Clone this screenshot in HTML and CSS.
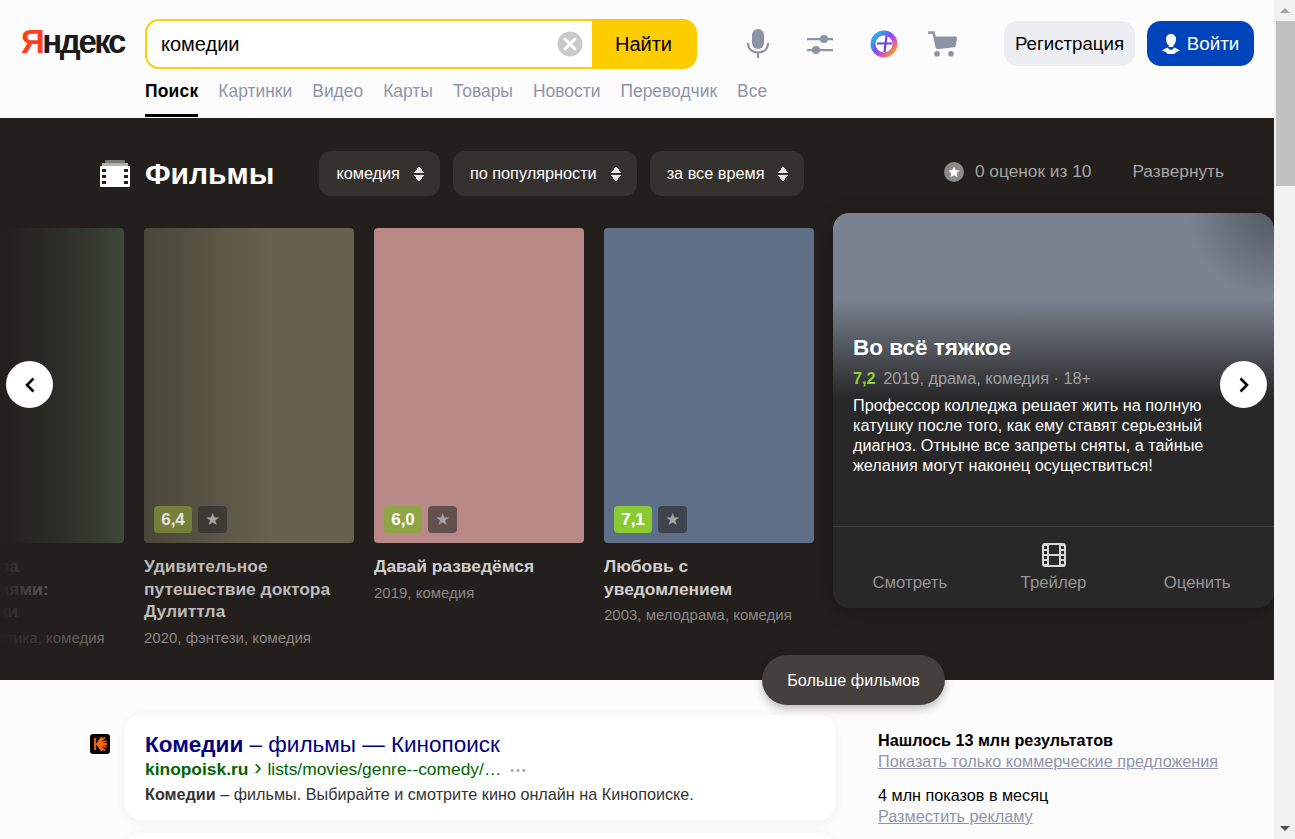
FILE: index.html
```html
<!DOCTYPE html>
<html lang="ru">
<head>
    <meta charset="UTF-8">
    <meta name="viewport" content="width=device-width, initial-scale=1.0">
    <title>комедии — Яндекс</title>
    <link rel="stylesheet" href="styles.css">
</head>
<body>
<div class="window">
<div class="page">

    <header class="header">
        <div class="header-top">
            <div class="logo"><span class="logo-red">Я</span>ндекс</div>
            <form class="search">
                <div class="search-field">
                    <span class="search-text">комедии</span>
                    <svg class="search-clear" width="26" height="26" viewBox="0 0 26 26"><circle cx="13" cy="13" r="12.5" fill="#c9c9c9"/><path d="M8 8l10 10M18 8L8 18" stroke="#fff" stroke-width="3" stroke-linecap="round"/></svg>
                </div>
                <div class="search-btn">Найти</div>
            </form>
            <div class="tools">
                <svg width="24" height="32" viewBox="0 0 24 32"><rect x="6" y="1" width="12" height="20" rx="6" fill="#8d93a5"/><path d="M2 15c0 6 4 9.500 10 9.500s10-3.500 10-9.500" fill="none" stroke="#8d93a5" stroke-width="2.200"/><rect x="11" y="24" width="2" height="6" fill="#8d93a5"/></svg>
                <svg width="26" height="24" viewBox="0 0 26 24"><rect x="0" y="6" width="26" height="2.200" fill="#8d93a5"/><circle cx="17" cy="7" r="4" fill="#8d93a5"/><rect x="0" y="17" width="26" height="2.200" fill="#8d93a5"/><circle cx="9" cy="18" r="4" fill="#8d93a5"/></svg>
                <svg width="28" height="28" viewBox="0 0 28 28">
                    <defs><linearGradient id="plus-ring" x1="0" y1=".3" x2=".8" y2="1"><stop offset="0" stop-color="#2fa8f0"/><stop offset=".4" stop-color="#7a4df0"/><stop offset=".7" stop-color="#d84fc0"/><stop offset="1" stop-color="#f5903a"/></linearGradient></defs>
                    <circle cx="14" cy="14" r="11" fill="#fff" stroke="url(#plus-ring)" stroke-width="5"/>
                    <path d="M7 13.500h15M16.500 6l-2 16" stroke="#6a45e0" stroke-width="2.200" fill="none"/>
                </svg>
                <svg class="tool-cart" width="30" height="26" viewBox="0 0 30 26"><path d="M1 1.500h4.500l3.500 15" fill="none" stroke="#8d93a5" stroke-width="2.600" stroke-linecap="round"/><path d="M7 5.500h20a2 2 0 0 1 2 2.300l-1.300 7a2 2 0 0 1-1.700 1.500l-16.500 2z" fill="#8d93a5"/><circle cx="9" cy="22.800" r="2.800" fill="#8d93a5"/><circle cx="23" cy="22.800" r="2.800" fill="#8d93a5"/></svg>
            </div>
            <a class="btn-register">Регистрация</a>
            <a class="btn-login">
                <svg width="18" height="22" viewBox="0 0 18 22"><path d="M9 1c3 0 5 2.200 5 5.200 0 2.600-1.400 5-2.800 6.300v1.500H6.800v-1.500C5.400 11.200 4 8.800 4 6.200 4 3.200 6 1 9 1z" fill="#fff"/><path d="M0 17.500c2-1.500 4-2.500 6-3 .5 1.500 1.500 2.300 3 2.300s2.500-.8 3-2.300c2 .5 4 1.500 6 3-2.500 1-4.500 1.800-6 3.500H6c-1.500-1.700-3.500-2.500-6-3.500z" fill="#fff"/></svg>
                Войти
            </a>
        </div>
        <nav class="tabs">
            <a class="tab tab-active">Поиск</a>
            <a class="tab">Картинки</a>
            <a class="tab">Видео</a>
            <a class="tab">Карты</a>
            <a class="tab">Товары</a>
            <a class="tab">Новости</a>
            <a class="tab">Переводчик</a>
            <a class="tab">Все</a>
        </nav>
    </header>

    <section class="films">
        <div class="films-head">
            <svg class="films-icon" width="30" height="27" viewBox="0 0 30 27"><rect x="5" y="0" width="20" height="3" rx="1" fill="#7b7876"/><rect x="2" y="3" width="26" height="3" fill="#b5b3b1"/><rect x="0" y="6" width="30" height="21" rx="1" fill="#fff"/><g fill="#231f1c"><rect x="2" y="9" width="4" height="3"/><rect x="2" y="15" width="4" height="3"/><rect x="2" y="21" width="4" height="3"/><rect x="24" y="9" width="4" height="3"/><rect x="24" y="15" width="4" height="3"/><rect x="24" y="21" width="4" height="3"/></g></svg>
            <h2 class="films-title">Фильмы</h2>
            <div class="chip">комедия <span class="chip-arrows"></span></div>
            <div class="chip">по популярности <span class="chip-arrows"></span></div>
            <div class="chip">за все время <span class="chip-arrows"></span></div>
            <div class="films-right">
                <svg width="20" height="20" viewBox="0 0 20 20"><circle cx="10" cy="10" r="10" fill="#8a8a8a"/><path d="M10 4.500l1.700 3.600 3.900.5-2.900 2.700.8 3.900-3.500-2-3.500 2 .8-3.900-2.900-2.700 3.900-.5z" fill="#fff"/></svg>
                <span class="rates">0 оценок из 10</span>
                <span class="expand">Развернуть</span>
            </div>
        </div>

        <div class="carousel">
            <article class="film">
                <div class="poster poster-green"></div>
                <h3 class="film-name">Охотники за привидениями: Наследники</h3>
                <p class="film-meta">2020, фантастика, комедия</p>
            </article>
            <article class="film">
                <div class="poster poster-olive">
                    <span class="score score-dim">6,4</span><span class="star-box">★</span>
                </div>
                <h3 class="film-name">Удивительное путешествие доктора Дулиттла</h3>
                <p class="film-meta">2020, фэнтези, комедия</p>
            </article>
            <article class="film">
                <div class="poster poster-pink">
                    <span class="score score-mid">6,0</span><span class="star-box">★</span>
                </div>
                <h3 class="film-name">Давай разведёмся</h3>
                <p class="film-meta">2019, комедия</p>
            </article>
            <article class="film">
                <div class="poster poster-blue">
                    <span class="score score-green">7,1</span><span class="star-box">★</span>
                </div>
                <h3 class="film-name">Любовь с уведомлением</h3>
                <p class="film-meta">2003, мелодрама, комедия</p>
            </article>
            <div class="fade-left"></div>
        </div>

        <article class="film-open">
            <div class="open-body">
                <h3 class="open-title">Во всё тяжкое</h3>
                <p class="open-meta"><b class="open-score">7,2</b> 2019, драма, комедия · 18+</p>
                <p class="open-desc">Профессор колледжа решает жить на полную катушку после того, как ему ставят серьезный диагноз. Отныне все запреты сняты, а тайные желания могут наконец осуществиться!</p>
            </div>
            <div class="open-actions">
                <span class="open-action">Смотреть</span>
                <span class="open-action">
                    <svg width="24" height="24" viewBox="0 0 24 24"><rect width="24" height="24" rx="3" fill="#d8d8d8"/><g fill="#282828"><rect x="7" y="2" width="10" height="9"/><rect x="7" y="13" width="10" height="9"/><rect x="2" y="3" width="3" height="3"/><rect x="2" y="8" width="3" height="3"/><rect x="2" y="13" width="3" height="3"/><rect x="2" y="18" width="3" height="3"/><rect x="19" y="3" width="3" height="3"/><rect x="19" y="8" width="3" height="3"/><rect x="19" y="13" width="3" height="3"/><rect x="19" y="18" width="3" height="3"/></g></svg>
                    Трейлер
                </span>
                <span class="open-action">Оценить</span>
            </div>
        </article>

        <a class="round-btn round-prev"><svg width="12" height="16" viewBox="0 0 12 16"><path d="M9.500 1.500L3 8l6.500 6.500" fill="none" stroke="#000" stroke-width="2.600"/></svg></a>
        <a class="round-btn round-next"><svg width="12" height="16" viewBox="0 0 12 16"><path d="M2.500 1.500L9 8l-6.500 6.500" fill="none" stroke="#000" stroke-width="2.600"/></svg></a>
        <a class="more-btn">Больше фильмов</a>
    </section>

    <div class="results">
        <div class="results-main">
            <svg class="favicon" width="20" height="20" viewBox="0 0 20 20"><rect width="20" height="20" rx="3" fill="#000"/><g stroke="#f60" stroke-width="1.800" fill="none"><path d="M5 4v12M15 3.500L7 10l8 6.500M16.500 7L7 10l9.500 3M17 10H7M12 3L7 10l5 7"/></g></svg>
            <div class="result-col">
                <div class="result">
                    <a class="result-title"><b>Комедии</b> – фильмы — Кинопоиск</a>
                    <div class="result-url"><b>kinopoisk.ru</b> <span class="crumb">›</span> lists/movies/genre--comedy/… <span class="dots">•••</span></div>
                    <p class="result-text"><b>Комедии</b> – фильмы. Выбирайте и смотрите кино онлайн на Кинопоиске.</p>
                </div>
                <div class="result"></div>
            </div>
        </div>
        <aside class="side">
            <div class="side-bold">Нашлось 13 млн результатов</div>
            <a class="side-link">Показать только коммерческие предложения</a>
            <div class="side-plain">4 млн показов в месяц</div>
            <a class="side-link">Разместить рекламу</a>
        </aside>
    </div>
</div>

<div class="scrollbar">
    <span class="scroll-up"></span>
    <span class="scroll-thumb"></span>
    <span class="scroll-down"></span>
</div>
</div>
</body>
</html>
```

FILE: styles.css
```css
* {
    box-sizing: border-box;
}

html, body {
    margin: 0;
    height: 100%;
    overflow: hidden;
}

body {
    font-family: "Liberation Sans", Arial, sans-serif;
    background-color: #fcfcfc;
    color: #000;
}

h2, h3, p {
    margin: 0;
}

.window {
    display: flex;
    height: 839px;
}

.page {
    position: relative;
    width: 1274px;
    flex: none;
    height: 839px;
    overflow: hidden;
}

/* шапка */
.header {
    height: 118px;
    padding-top: 19px;
}

.header-top {
    display: flex;
    align-items: flex-start;
    height: 50px;
}

.logo {
    width: 124px;
    padding: 3px 0 0 21px;
    font-size: 33px;
    line-height: 40px;
    font-weight: bold;
    letter-spacing: -2.400px;
    color: #1a1a1a;
    flex: none;
}

.logo-red {
    color: #fc3f1d;
}

.search {
    display: flex;
    width: 552px;
    height: 50px;
    margin-left: 21px;
    background-color: #fc0;
    border-radius: 14px;
    padding: 2px;
    flex: none;
}

.search-field {
    display: flex;
    align-items: center;
    justify-content: space-between;
    width: 445px;
    background-color: #fff;
    border-radius: 12px 0 0 12px;
    padding: 0 9px 0 14px;
}

.search-text {
    font-size: 20px;
}

.search-btn {
    flex: 1;
    text-align: center;
    font-size: 20px;
    line-height: 46px;
}

.tools {
    display: flex;
    align-items: center;
    width: 307px;
    height: 50px;
    padding-left: 49px;
    gap: 37px;
    flex: none;
}

.tools svg {
    flex: none;
}

.tools .tool-cart {
    margin-left: -7px;
}

.btn-register, .btn-login {
    display: flex;
    align-items: center;
    justify-content: center;
    height: 45px;
    margin-top: 2px;
    border-radius: 14px;
    font-size: 18.700px;
    flex: none;
}

.btn-register {
    width: 131px;
    background-color: #eceef2;
}

.btn-login {
    width: 107px;
    margin-left: 12px;
    gap: 7px;
    background-color: #0044bb;
    color: #fff;
}

.tabs {
    display: flex;
    gap: 20px;
    margin: 11px 0 0 145px;
}

.tab {
    height: 37px;
    font-size: 17.450px;
    line-height: 22px;
    color: #8f95a8;
}

.tab-active {
    font-weight: bold;
    letter-spacing: .2px;
    color: #000;
    border-bottom: 3px solid #000;
}

/* блок с фильмами */
.films {
    position: relative;
    height: 562px;
    background-color: #231f1c;
}

.films-head {
    display: flex;
    align-items: center;
    height: 45px;
    padding: 0 50px 0 100px;
    position: relative;
    top: 33px;
}

.films-icon {
    flex: none;
}

.films-title {
    margin: 0 45px 0 15px;
    font-size: 30px;
    color: #fff;
}

.chip {
    display: flex;
    align-items: center;
    gap: 14px;
    height: 45px;
    margin-right: 13px;
    padding: 0 16px 0 17px;
    background-color: #35312e;
    border-radius: 12px;
    font-size: 16.250px;
    color: #fff;
    white-space: nowrap;
}

.chip-arrows {
    display: inline-block;
    width: 10px;
    height: 16px;
    background:
        linear-gradient(to top left, #e6e6e6 50%, transparent 50%) left top / 5px 7px no-repeat,
        linear-gradient(to top right, #e6e6e6 50%, transparent 50%) right top / 5px 7px no-repeat,
        linear-gradient(to bottom left, #e6e6e6 50%, transparent 50%) left bottom / 5px 7px no-repeat,
        linear-gradient(to bottom right, #e6e6e6 50%, transparent 50%) right bottom / 5px 7px no-repeat;
}

.films-right {
    display: flex;
    align-items: center;
    margin: -4px 0 0 auto;
    color: #a5a5a5;
    font-size: 17.300px;
}

.rates {
    margin-left: 11px;
}

.expand {
    margin-left: 41px;
}

.carousel {
    position: relative;
    display: flex;
    gap: 20px;
    margin: 65px 0 0 -86px;
}

.film {
    width: 210px;
    flex: none;
}

.poster {
    display: flex;
    align-items: flex-end;
    gap: 6px;
    height: 315px;
    padding: 0 0 10px 10px;
    border-radius: 4px;
    margin-bottom: 12px;
}

.poster-green {
    background: linear-gradient(to right, #232a22, #3f4a3c);
}

.poster-olive {
    background: linear-gradient(to right, #4a4639, #67624f 60%);
}

.poster-pink {
    background-color: #b98988;
}

.poster-blue {
    background-color: #5f6f87;
}

.score {
    width: 38px;
    height: 27px;
    border-radius: 4px;
    font-size: 17px;
    font-weight: bold;
    line-height: 27px;
    text-align: center;
    color: #fff;
}

.score-dim {
    background-color: #748039;
    color: #e2e2e2;
}

.score-mid {
    background-color: #8fa442;
}

.score-green {
    background-color: #8acb35;
}

.star-box {
    width: 29px;
    height: 27px;
    border-radius: 4px;
    background-color: rgba(40, 40, 40, .6);
    color: #a5a5a5;
    font-size: 17px;
    line-height: 27px;
    text-align: center;
}

.film-name {
    font-size: 17.400px;
    line-height: 22.500px;
    color: #cfcfcf;
}

.film-meta {
    margin-top: 6px;
    font-size: 15px;
    line-height: 18px;
    color: #8a8784;
}

.film:nth-child(1) .film-name,
.film:nth-child(2) .film-name {
    color: #bdbbb9;
}

.fade-left {
    position: absolute;
    left: 86px;
    top: 0;
    bottom: 0;
    width: 130px;
    background: linear-gradient(to right, #231f1c, rgba(35, 31, 28, 0));
}

.film-open {
    position: absolute;
    left: 833px;
    top: 95px;
    width: 441px;
    height: 395px;
    display: flex;
    flex-direction: column;
    border-radius: 16px;
    overflow: hidden;
    background:
        radial-gradient(circle at 100% 0, rgba(70, 74, 84, .75), rgba(70, 74, 84, 0) 85px),
        linear-gradient(to bottom, #7b8290 0, #7b8290 85px, #282828 185px);
    box-shadow: 0 4px 20px rgba(0, 0, 0, .3);
}

.open-body {
    flex: 1;
    padding: 121px 20px 0;
}

.open-title {
    font-size: 22.500px;
    line-height: 28px;
    color: #fff;
}

.open-meta {
    margin-top: 6px;
    font-size: 16.300px;
    line-height: 20px;
    color: #a0a0a0;
}

.open-score {
    color: #8fd030;
    margin-right: 3px;
}

.open-desc {
    margin-top: 7px;
    width: 365px;
    font-size: 16.250px;
    line-height: 20px;
    color: #fff;
}

.open-actions {
    display: flex;
    height: 82px;
    padding: 16px 5px 0;
    border-top: 1px solid #3d3d3d;
}

.open-action {
    display: flex;
    flex: 1;
    flex-direction: column;
    align-items: center;
    justify-content: flex-end;
    gap: 6px;
    height: 50px;
    font-size: 16.800px;
    color: #969696;
}

.round-btn {
    position: absolute;
    top: 243px;
    display: flex;
    align-items: center;
    justify-content: center;
    width: 47px;
    height: 47px;
    border-radius: 50%;
    background-color: #fff;
}

.round-prev {
    left: 6px;
}

.round-next {
    left: 1220px;
}

.more-btn {
    position: absolute;
    left: 762px;
    top: 537px;
    width: 183px;
    height: 50px;
    border-radius: 25px;
    background-color: #45403e;
    box-shadow: 0 4px 8px rgba(0, 0, 0, .25);
    font-size: 16.200px;
    line-height: 50px;
    text-align: center;
    color: #fff;
}

/* выдача */
.results {
    display: flex;
    padding-top: 35px;
}

.results-main {
    display: flex;
    width: 835px;
    flex: none;
    padding-left: 90px;
}

.favicon {
    flex: none;
    margin: 19px 15px 0 0;
}

.result-col {
    flex: 1;
}

.result {
    height: 105px;
    margin-bottom: 13px;
    padding: 16px 20px;
    border-radius: 16px;
    background-color: #fff;
    box-shadow: 0 2px 12px rgba(0, 0, 0, .05);
}

.result-title {
    display: block;
    font-size: 22.500px;
    line-height: 27px;
    color: #000080;
}

.result-url {
    margin-top: -1px;
    font-size: 17.400px;
    line-height: 24px;
    color: #006400;
    white-space: nowrap;
}

.crumb {
    font-size: 22px;
    line-height: 20px;
    margin: 0 1px;
}

.dots {
    margin-left: 4px;
    color: #a0a4b0;
    font-size: 11px;
    letter-spacing: 2px;
    vertical-align: 1px;
}

.result-text {
    margin-top: 2px;
    font-size: 16.200px;
    line-height: 20px;
    color: #333;
    white-space: nowrap;
}

.side {
    padding: 15px 0 0 43px;
    font-size: 16.200px;
    line-height: 21px;
}

.side-bold {
    font-weight: bold;
}

.side-link {
    display: block;
    color: #8f95a8;
    text-decoration: underline;
}

.side-plain {
    margin-top: 13px;
}

/* полоса прокрутки */
.scrollbar {
    position: relative;
    flex: 1;
    display: flex;
    flex-direction: column;
    align-items: center;
    background-color: #f1f1f1;
}

.scroll-up, .scroll-down {
    width: 0;
    height: 0;
    border-left: 5px solid transparent;
    border-right: 5px solid transparent;
}

.scroll-up {
    margin-top: 8px;
    border-bottom: 5px solid #a3a3a3;
}

.scroll-thumb {
    width: 19px;
    height: 165px;
    margin: 8px 0 0 2px;
    background-color: #c1c1c1;
}

.scroll-down {
    margin-top: auto;
    margin-bottom: 8px;
    border-top: 5px solid #505050;
}
```
